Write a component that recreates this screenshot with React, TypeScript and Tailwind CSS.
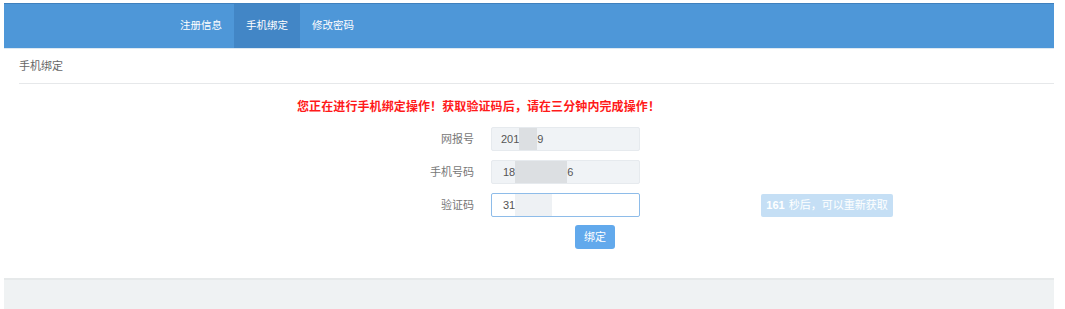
import React from "react";

const font = { fontFamily: '"Liberation Sans", "Noto Sans CJK SC", sans-serif' };

function Blur({ w, light }: { w: number; light?: boolean }) {
  return (
    <span
      className={`inline-block h-[22px] align-middle ${light ? "bg-[#eef1f4]" : "bg-[#dcdfe2]"}`}
      style={{ width: w }}
    />
  );
}

export default function App() {
  const tabs = ["注册信息", "手机绑定", "修改密码"];

  return (
    <div className="w-[1065px] h-[309px] bg-white overflow-hidden" style={font}>
      <div className="ml-[4px] w-[1050px] pt-[3px] flex flex-col h-full">
        {/* Top nav */}
        <div className="h-[45px] bg-[#4e97d8] border-t border-[#3f80bd] flex pl-[164px] shadow-[0_1px_0_#dde8f2]">
          {tabs.map((t, i) => (
            <div
              key={t}
              className={`h-full flex items-center px-[12px] text-[10.5px] text-white ${
                i === 1 ? "bg-[#4286c6]" : ""
              }`}
            >
              {t}
            </div>
          ))}
        </div>

        {/* Content */}
        <div className="flex-1 pl-[15px]">
          <div className="h-[35px] mt-[1px] flex items-center border-b border-[#e6e8ea] text-[11px] text-[#666]">
            手机绑定
          </div>

          <div className="pl-[278px] mt-[15px] text-[12px] tracking-[0.1px] leading-[16px] font-bold text-[#ff1a1a]">
            您正在进行手机绑定操作！获取验证码后，请在三分钟内完成操作！
          </div>

          <div className="mt-[12px] flex flex-col gap-[9px]">
            <div className="flex items-center h-[24px]">
              <div className="w-[455px] text-right text-[11px] text-[#777]">网报号</div>
              <div className="ml-[17px] w-[149px] h-[24px] rounded-[2px] border border-[#e6eaee] bg-[#f0f3f6] flex items-center pl-[9px] text-[11px] text-[#555]">
                201<Blur w={18} />9
              </div>
            </div>
            <div className="flex items-center h-[24px]">
              <div className="w-[455px] text-right text-[11px] text-[#777]">手机号码</div>
              <div className="ml-[17px] w-[149px] h-[24px] rounded-[2px] border border-[#e6eaee] bg-[#f0f3f6] flex items-center pl-[11px] text-[11px] text-[#555]">
                18<Blur w={52} />6
              </div>
            </div>
            <div className="flex items-center h-[24px]">
              <div className="w-[455px] text-right text-[11px] text-[#777]">验证码</div>
              <div className="ml-[17px] w-[149px] h-[24px] rounded-[2px] border border-[#8ebce9] bg-white flex items-center pl-[11px] text-[11px] text-[#555]">
                31<Blur w={37} light />
              </div>
              <div className="ml-[121px] w-[132px] h-[23px] rounded-[2px] bg-[#c5dff5] flex items-center justify-center text-[11px] text-white">
                <span className="font-bold mr-[4px]">161</span>秒后，可以重新获取
              </div>
            </div>
          </div>

          <div className="mt-[8px] pl-[556px]">
            <div className="w-[40px] h-[24px] rounded-[3px] bg-[#62a9ec] flex items-center justify-center text-[11px] text-white">
              绑定
            </div>
          </div>
        </div>

        {/* Footer */}
        <div className="h-[31px] bg-[#eff2f3] border-t-[2px] border-[#e6e9ea]" />
      </div>
    </div>
  );
}
